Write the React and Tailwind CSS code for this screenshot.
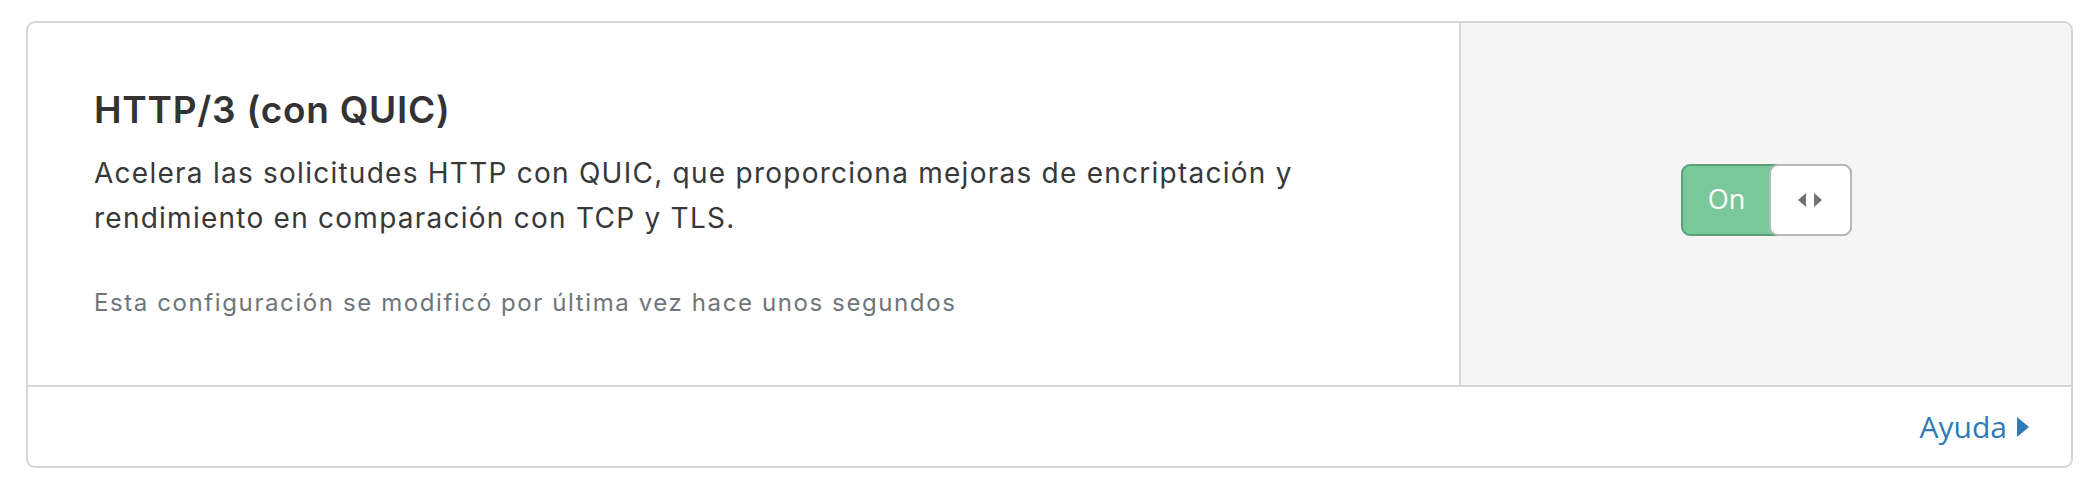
import { useState } from "react";

const SettingToggle = ({ on, onChange }) => (
  <button
    onClick={() => onChange(!on)}
    className="relative flex h-[72px] w-[171px] items-stretch rounded-[9px] border-2 border-[#5e9f79] bg-[#7ac79a]"
    style={{ fontFamily: '"Open Sans", sans-serif' }}
  >
    <span className="flex w-[86px] items-center justify-center pl-[2px] text-[27px] text-white">
      {on ? "On" : "Off"}
    </span>
    {/* Knob */}
    <span className="-my-[2px] -mr-[2px] flex flex-1 items-center justify-center gap-[8px] rounded-[9px] border-2 border-[#b5b9bb] bg-white">
      <svg width="8" height="14" viewBox="0 0 8 14">
        <path d="M8 0 L0 7 L8 14 Z" fill="#6d7276" />
      </svg>
      <svg width="8" height="14" viewBox="0 0 8 14">
        <path d="M0 0 L8 7 L0 14 Z" fill="#6d7276" />
      </svg>
    </span>
  </button>
);

export default function App() {
  const [on, setOn] = useState(true);

  return (
    <div className="min-h-[488px] bg-white pl-[26px] pr-[19px] pt-[21px]">
      <div className="overflow-hidden rounded-[9px] border-2 border-[#d6d6d6] bg-white">
        {/* Main row */}
        <div className="flex h-[364px] border-b-2 border-[#d6d6d6]">
          <div
            className="flex flex-1 flex-col justify-center pl-[66px] pr-[40px] pb-[2px]"
            style={{ fontFamily: "Inter, sans-serif" }}
          >
            <h3 className="text-[37px] font-semibold leading-[44px] tracking-[0.75px] text-[#333333]">
              HTTP/3 (con QUIC)
            </h3>
            <p className="mt-[19px] max-w-[1240px] text-[28px] leading-[45px] tracking-[1.25px] text-[#363839]">
              Acelera las solicitudes HTTP con QUIC, que proporciona mejoras de encriptación y
              rendimiento en comparación con TCP y TLS.
            </p>
            <p className="mt-[46px] text-[24px] leading-[32px] tracking-[1.6px] text-[#6f7579]">
              Esta configuración se modificó por última vez hace unos segundos
            </p>
          </div>
          <div className="flex w-[612px] items-center justify-center border-l-2 border-[#d6d6d6] bg-[#f5f5f5] pb-[9px]">
            <SettingToggle on={on} onChange={setOn} />
          </div>
        </div>

        {/* Footer */}
        <div className="flex h-[79px] items-center justify-end pr-[42px]">
          <a
            href="#"
            className="flex items-center gap-[10px] text-[30px] text-[#2f7bb8]"
            style={{ fontFamily: '"Open Sans", sans-serif' }}
          >
            Ayuda
            <svg width="12" height="20" viewBox="0 0 12 20">
              <path d="M0 0 L12 10 L0 20 Z" fill="#2f7bb8" />
            </svg>
          </a>
        </div>
      </div>
    </div>
  );
}
